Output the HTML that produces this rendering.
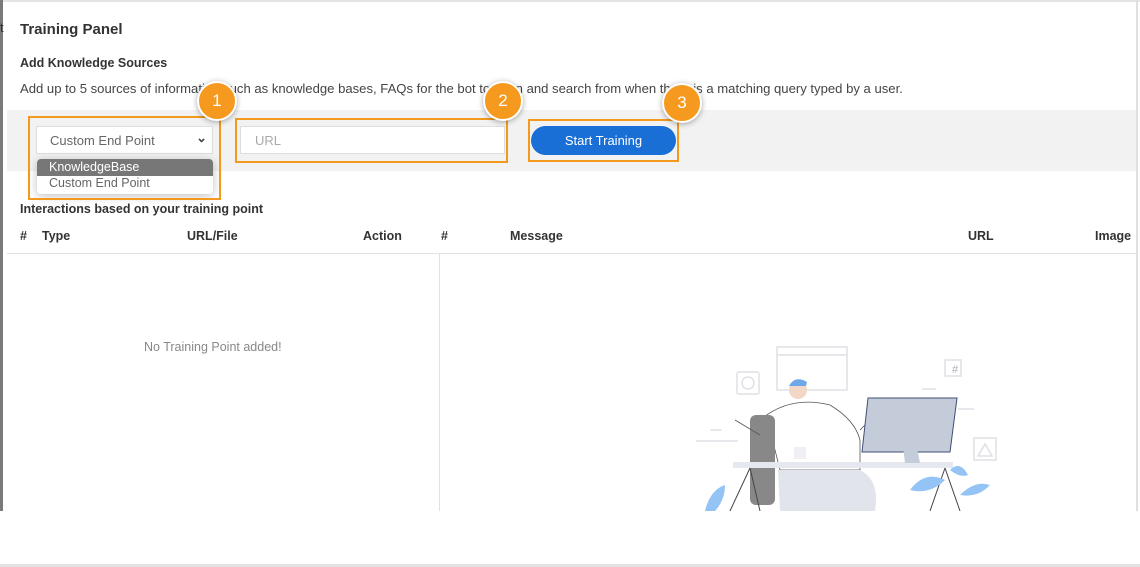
<!DOCTYPE html>
<html><head><meta charset="utf-8"><style>
*{margin:0;padding:0;box-sizing:border-box}
body{width:1140px;height:567px;background:#fff;font-family:"Liberation Sans",Arial,sans-serif;position:relative;overflow:hidden;color:#333}
.a{position:absolute}
.b{font-weight:bold;color:#333}
.circ{position:absolute;width:40px;height:40px;border-radius:50%;background:#f59a1f;border:2px solid #fff;box-shadow:0 1px 6px rgba(0,0,0,.35);color:#fff;font-size:17px;text-align:center;line-height:36px}
.ob{position:absolute;border:2px solid #f39a1e}
</style></head><body>
<div class="a" style="left:0;top:0;width:1140px;height:2px;background:#e4e4e4"></div>
<div class="a" style="left:0;top:0;width:3px;height:511px;background:#7a7a7a"></div>
<div class="a" style="left:1136px;top:0;width:2px;height:511px;background:#e0e0e0"></div>
<div class="a" style="left:0;top:564px;width:1140px;height:3px;background:#e2e2e2"></div>
<div class="a" style="left:0;top:20px;font-size:13px;color:#333">t</div>
<div class="a b" style="left:20px;top:21px;font-size:15px">Training Panel</div>
<div class="a b" style="left:20px;top:56px;font-size:12.5px">Add Knowledge Sources</div>
<div class="a" style="left:20px;top:81px;font-size:13.1px;color:#444">Add up to 5 sources of information such as knowledge bases, FAQs for the bot to learn and search from when there is a matching query typed by a user.</div>
<div class="a" style="left:7px;top:110px;width:1129px;height:61px;background:#f2f2f2"></div>
<div class="a" style="left:36px;top:126px;width:177px;height:28px;background:#fff;border:1px solid #ddd;font-size:13px;color:#666;padding:6px 13px">Custom End Point<span style="position:absolute;right:5px;top:3px;font-size:13px;color:#444;font-weight:bold">&#8964;</span></div>
<div class="a" style="left:37px;top:159px;width:176px;height:35px;background:#fff;border-radius:4px;box-shadow:0 2px 10px rgba(0,0,0,.25);overflow:hidden;font-size:12.5px">
<div style="background:#777;color:#fff;height:17px;padding:1px 12px">KnowledgeBase</div>
<div style="color:#666;padding:0 12px">Custom End Point</div></div>
<div class="ob" style="left:28px;top:116px;width:193px;height:84px"></div>
<div class="a" style="left:240px;top:126px;width:265px;height:28px;background:#fff;border:1px solid #ddd;font-size:13px;color:#aaa;padding:6px 14px">URL</div>
<div class="ob" style="left:235px;top:118px;width:273px;height:45px"></div>
<div class="a" style="left:531px;top:126px;width:145px;height:29px;background:#1a6fd6;border-radius:15px;color:#fff;font-size:13px;text-align:center;line-height:29px">Start Training</div>
<div class="ob" style="left:528px;top:119px;width:151px;height:43px"></div>
<div class="circ" style="left:197px;top:81px">1</div>
<div class="circ" style="left:483px;top:81px">2</div>
<div class="circ" style="left:662px;top:83px">3</div>
<div class="a b" style="left:20px;top:202px;font-size:12.5px">Interactions based on your training point</div>
<div class="a b" style="left:20px;top:229px;font-size:12.5px">#</div>
<div class="a b" style="left:42px;top:229px;font-size:12.5px">Type</div>
<div class="a b" style="left:187px;top:229px;font-size:12.5px">URL/File</div>
<div class="a b" style="left:363px;top:229px;font-size:12.5px">Action</div>
<div class="a b" style="left:441px;top:229px;font-size:12.5px">#</div>
<div class="a b" style="left:510px;top:229px;font-size:12.5px">Message</div>
<div class="a b" style="left:968px;top:229px;font-size:12.5px">URL</div>
<div class="a b" style="left:1095px;top:229px;font-size:12.5px">Image</div>
<div class="a" style="left:7px;top:253px;width:1129px;height:1px;background:#e2e2e2"></div>
<div class="a" style="left:439px;top:253px;width:1px;height:258px;background:#e2e2e2"></div>
<div class="a" style="left:144px;top:340px;font-size:12.5px;color:#888">No Training Point added!</div>
<svg class="a" style="left:660px;top:320px" width="360" height="191" viewBox="0 0 360 191">
<g fill="none" stroke="#dde0e6" stroke-width="1.5">
<rect x="117" y="27" width="70" height="43"/><line x1="117" y1="35" x2="187" y2="35"/>
<rect x="77" y="52" width="22" height="22" rx="2"/><circle cx="88" cy="63" r="6"/>
<rect x="285" y="40" width="16" height="16"/><rect x="314" y="118" width="22" height="22"/>
<path d="M318 136 L325 124 L332 136Z"/>
<line x1="36" y1="121" x2="78" y2="121"/><line x1="50" y1="110" x2="62" y2="110"/>
<line x1="262" y1="69" x2="276" y2="69"/><line x1="298" y1="89" x2="314" y2="89"/>
</g>
<text x="292" y="53" font-size="11" fill="#aab" font-family="Liberation Sans">#</text>
<path d="M100 100 Q130 75 170 85 Q195 100 200 120 L200 150 L120 150 L110 110Z" fill="#fff" stroke="#555" stroke-width="0.8"/>
<rect x="90" y="95" width="25" height="90" rx="6" fill="#888"/>
<path d="M118 150 L200 150 Q220 160 215 191 L120 191Z" fill="#e2e4ec"/>
<circle cx="138" cy="70" r="9" fill="#f2d7c6"/><path d="M129 66 Q135 55 147 62 L146 66Z" fill="#6fa8e8"/>
<path d="M75 100 L100 115 M200 110 L205 105" stroke="#555" stroke-width="0.8"/>
<rect x="73" y="142" width="220" height="6" fill="#e6e8ef"/>
<path d="M208 78 L297 78 L290 132 L202 132Z" fill="#c4ccd9" stroke="#404e78" stroke-width="1"/>
<path d="M242 118 L255 118 L260 143 L245 143Z" fill="#c4ccd9"/>
<rect x="134" y="127" width="12" height="12" fill="#f0f0f4"/>
<path d="M70 191 L90 148 M100 191 L90 148 M270 191 L285 148 M300 191 L285 148" stroke="#444" stroke-width="1"/>
<path d="M45 191 Q50 170 65 165 Q65 180 55 191Z M250 170 Q265 150 285 160 Q270 175 250 170Z M300 175 Q315 160 330 165 Q318 178 300 175Z M290 150 Q300 140 308 155 Q300 158 290 150Z" fill="#94c4f5"/>
</svg>
</body></html>
